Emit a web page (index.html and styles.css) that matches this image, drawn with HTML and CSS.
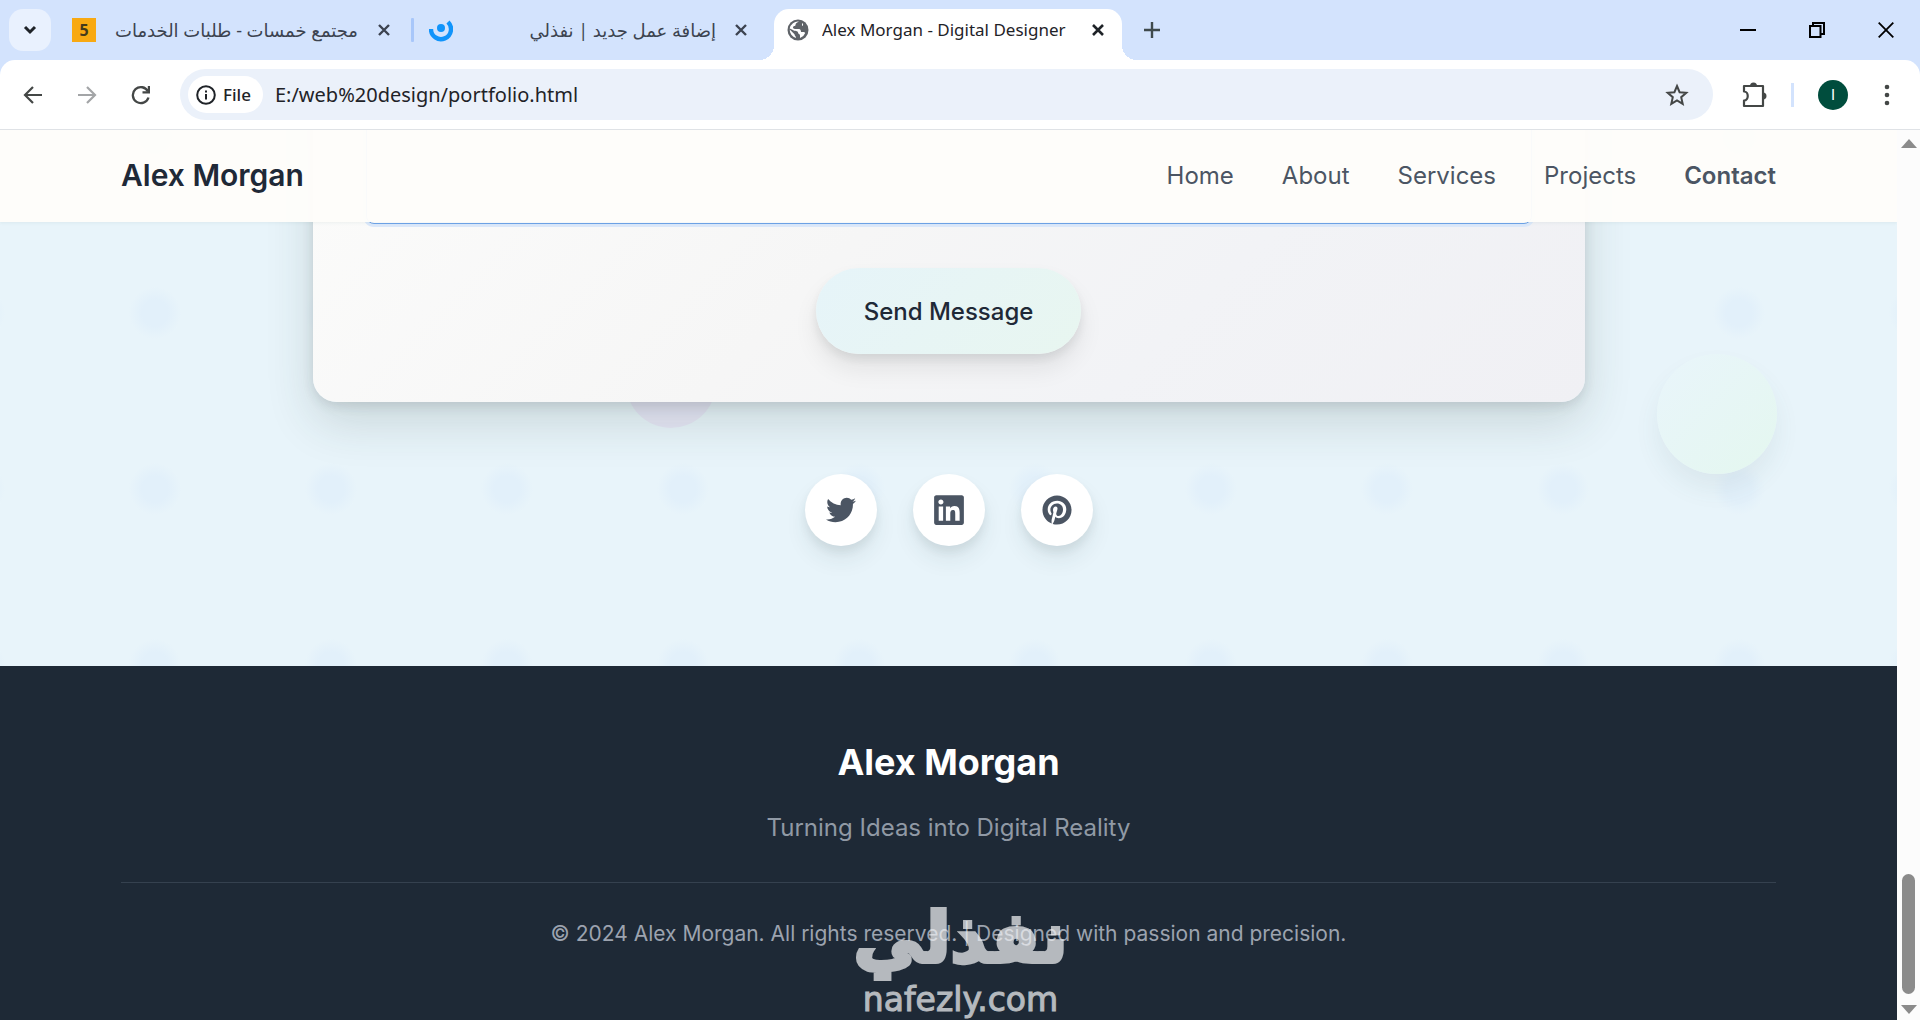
FILE: index.html
```html
<!DOCTYPE html>
<html lang="en">
<head>
<meta charset="utf-8">
<title>Alex Morgan - Digital Designer</title>
<link rel="stylesheet" href="styles.css">
</head>
<body>
<div class="browser">
  <div class="tabstrip">
    <button class="tab-search" aria-label="Search tabs"><svg width="14" height="10" viewBox="0 0 14 10"><path d="M2 2l5 5 5-5" fill="none" stroke="#1f2328" stroke-width="3"/></svg></button>
    <div class="tab tab-first">
      <span class="favicon-five">5</span>
      <span class="tab-title" dir="rtl" lang="ar">مجتمع خمسات - طلبات الخدمات</span>
      <button class="icon-btn" aria-label="Close tab"><svg width="14" height="14" viewBox="0 0 14 14"><path d="M2 2l10 10M12 2L2 12" stroke="#3c4350" stroke-width="2.4"/></svg></button>
    </div>
    <span class="tab-sep"></span>
    <div class="tab tab-second">
      <svg width="24" height="24" viewBox="0 0 24 24"><circle cx="12" cy="10" r="4" fill="#1094fb"/><path d="M2 11a10 10 0 1 0 17-7" fill="none" stroke="#1094fb" stroke-width="4.4"/></svg>
      <span class="tab-title" dir="rtl" lang="ar">إضافة عمل جديد | نفذلي</span>
      <button class="icon-btn" aria-label="Close tab"><svg width="14" height="14" viewBox="0 0 14 14"><path d="M2 2l10 10M12 2L2 12" stroke="#3c4350" stroke-width="2.4"/></svg></button>
    </div>
    <div class="tab tab-active">
      <svg width="22" height="22" viewBox="0 0 22 22"><circle cx="11" cy="11" r="10.5" fill="#5f6368"/><path d="M12 2.600c-2 1.400-3.500 1.400-3.500 3.400 0 1.500-2.500.6-2.500 2.500 0 2 3.500 1.500 6 1.500 1.500 0 2 1.500 2 3h2.500c.6 0 1.500.5 1.700 1a8.300 8.300 0 0 1-5.200 5v-2.500c0-1.500-2-1.500-2-3 0-2-3.500-1-5-2.500L2.700 9.500A8.400 8.400 0 0 1 12 2.600zM2.700 10.500l4.800 4.800c0 1.700 1.500 1.700 1.500 3.700a8.400 8.400 0 0 1-6.300-8.500zM15 4c1.500 1 1.500 2.500 0 3" fill="#fff"/></svg>
      <span class="tab-title">Alex Morgan - Digital Designer</span>
      <button class="icon-btn" aria-label="Close tab"><svg width="14" height="14" viewBox="0 0 14 14"><path d="M2 2l10 10M12 2L2 12" stroke="#1f2328" stroke-width="2.600"/></svg></button>
    </div>
    <button class="icon-btn new-tab" aria-label="New tab"><svg width="16" height="16" viewBox="0 0 16 16"><path d="M8 0v16M0 8h16" stroke="#3f4a4c" stroke-width="2.400"/></svg></button>
    <div class="window-controls">
      <button aria-label="Minimize"><svg width="16" height="16" viewBox="0 0 16 16"><path d="M0 8h16" stroke="#000" stroke-width="2"/></svg></button>
      <button aria-label="Restore"><svg width="16" height="16" viewBox="0 0 16 16"><path d="M1 4h10.500v11H1zM4 4V1h11v11h-3.500" fill="none" stroke="#000" stroke-width="2"/></svg></button>
      <button aria-label="Close"><svg width="16" height="16" viewBox="0 0 16 16"><path d="M.7.7l14.600 14.600M15.300.7L.7 15.300" stroke="#000" stroke-width="1.800"/></svg></button>
    </div>
  </div>

  <div class="toolbar-wrap">
    <div class="toolbar">
      <div class="nav-buttons">
        <button class="icon-btn" aria-label="Back"><svg width="20" height="20" viewBox="0 0 20 20"><path d="M19 10H2M10 2l-8 8 8 8" fill="none" stroke="#444746" stroke-width="2.200"/></svg></button>
        <button class="icon-btn" aria-label="Forward"><svg width="20" height="20" viewBox="0 0 20 20"><path d="M1 10h17M10 2l8 8-8 8" fill="none" stroke="#a3a5a7" stroke-width="2.200"/></svg></button>
        <button class="icon-btn" aria-label="Reload"><svg width="20" height="20" viewBox="0 0 20 20"><path d="M17.500 12.500A8 8 0 1 1 17 6.500" fill="none" stroke="#444746" stroke-width="2.300"/><path d="M19 1v7.500h-7.500v-2.200h5.300V1z" fill="#444746"/></svg></button>
      </div>
      <div class="omnibox">
        <button class="file-chip"><svg width="20" height="20" viewBox="0 0 20 20"><circle cx="10" cy="10" r="8.800" fill="none" stroke="#1f2328" stroke-width="2"/><path d="M10 9v5.500M10 5.500v2" stroke="#1f2328" stroke-width="2"/></svg>File</button>
        <input class="url" type="text" aria-label="Address" value="E:/web%20design/portfolio.html">
        <button class="icon-btn" aria-label="Bookmark"><svg width="24" height="24" viewBox="0 0 24 24"><path d="M12 3l2.600 6.200 6.700.6-5.100 4.400 1.500 6.600-5.700-3.500-5.700 3.500 1.500-6.600-5.100-4.400 6.700-.6z" fill="none" stroke="#444746" stroke-width="2"/></svg></button>
      </div>
      <button class="icon-btn" aria-label="Extensions"><svg width="26" height="26" viewBox="0 0 26 26"><path d="M3 4h19v20H3v-5.500c5 0 5-9 0-9z" fill="none" stroke="#444746" stroke-width="2.200" stroke-linejoin="round"/><path d="M9 4a3.500 3.500 0 0 1 7 0zM22 10.500a3.500 3.500 0 0 1 0 7z" fill="#444746"/></svg></button>
      <span class="tool-sep"></span>
      <button class="avatar">I</button>
      <button class="icon-btn menu" aria-label="Menu"><svg width="6" height="22" viewBox="0 0 6 22"><g fill="#444746"><circle cx="3" cy="3" r="2.300"/><circle cx="3" cy="11" r="2.300"/><circle cx="3" cy="19" r="2.300"/></g></svg></button>
    </div>
  </div>

  <div class="viewport">
    <div class="page">
      <header class="site-header">
        <a class="brand" href="#home">Alex Morgan</a>
        <nav class="site-nav">
          <a href="#home">Home</a><a href="#about">About</a><a href="#services">Services</a><a href="#projects">Projects</a><a class="current" href="#contact">Contact</a>
        </nav>
      </header>
      <main class="contact" id="contact">
        <svg class="dots" aria-hidden="true"><defs><radialGradient id="fade"><stop offset=".5" stop-color="#e2f0fa"/><stop offset="1" stop-color="#e8f4fa"/></radialGradient><pattern id="dot" width="176" height="176" patternUnits="userSpaceOnUse" x="67" y="95"><circle cx="88" cy="88" r="26" fill="url(#fade)"/></pattern></defs><rect width="100%" height="100%" fill="url(#dot)"/></svg>
        <span class="blob"></span>
        <span class="orb"></span>
        <form class="card">
          <textarea class="message" aria-label="Message"></textarea>
          <button class="send" type="button">Send Message</button>
        </form>
        <div class="social">
          <a href="#twitter" aria-label="Twitter"><svg width="30" height="30" viewBox="0 0 512 512"><path fill="#4b5563" d="M459.370 151.716c.325 4.548.325 9.097.325 13.645 0 138.720-105.583 298.558-298.558 298.558-59.452 0-114.680-17.219-161.137-47.106 8.447.974 16.568 1.299 25.340 1.299 49.055 0 94.213-16.568 130.274-44.832-46.132-.975-84.792-31.188-98.112-72.772 6.498.974 12.995 1.624 19.818 1.624 9.421 0 18.843-1.300 27.614-3.573-48.081-9.747-84.143-51.980-84.143-102.985v-1.299c13.969 7.797 30.214 12.670 47.431 13.319-28.264-18.843-46.781-51.005-46.781-87.391 0-19.492 5.197-37.360 14.294-52.954 51.655 63.675 129.300 105.258 216.365 109.807-1.624-7.797-2.599-15.918-2.599-24.040 0-57.828 46.782-104.934 104.934-104.934 30.213 0 57.502 12.670 76.670 33.137 23.715-4.548 46.456-13.320 66.599-25.340-7.798 24.366-24.366 44.833-46.132 57.827 21.117-2.273 41.584-8.122 60.426-16.243-14.292 20.791-32.161 39.308-52.628 54.253z"/></svg></a>
          <a href="#linkedin" aria-label="LinkedIn"><svg width="30" height="34" viewBox="0 0 448 512"><path fill="#4b5563" d="M416 32H31.900C14.300 32 0 46.500 0 64.300v383.400C0 465.500 14.300 480 31.900 480H416c17.600 0 32-14.500 32-32.300V64.300c0-17.800-14.400-32.300-32-32.300zM135.400 416H69V202.200h66.500V416zm-33.200-243c-21.300 0-38.500-17.300-38.500-38.500S80.900 96 102.200 96c21.200 0 38.500 17.300 38.500 38.500 0 21.300-17.200 38.500-38.500 38.500zm282.100 243h-66.400V312c0-24.800-.5-56.700-34.500-56.700-34.600 0-39.900 27-39.900 54.900V416h-66.400V202.200h63.700v29.200h.9c8.900-16.800 30.600-34.500 62.900-34.500 67.200 0 79.700 44.300 79.700 101.900V416z"/></svg></a>
          <a href="#pinterest" aria-label="Pinterest"><svg width="30" height="30" viewBox="0 0 496 512"><path fill="#4b5563" d="M496 256c0 137-111 248-248 248-25.600 0-50.200-3.900-73.400-11.100 10.100-16.500 25.200-43.500 30.800-65 3-11.600 15.400-59 15.400-59 8.100 15.400 31.700 28.500 56.800 28.500 74.800 0 128.700-68.800 128.700-154.300 0-81.900-66.900-143.200-152.900-143.200-107 0-163.900 71.800-163.900 150.100 0 36.400 19.400 81.700 50.300 96.100 4.700 2.200 7.200 1.200 8.300-3.300.8-3.400 5-20.300 6.900-28.100.6-2.500.3-4.700-1.700-7.100-10.100-12.500-18.300-35.300-18.300-56.600 0-54.700 41.400-107.600 112-107.600 60.900 0 103.600 41.500 103.600 100.900 0 67.100-33.900 113.600-78 113.600-24.300 0-42.600-20.100-36.700-44.800 7-29.500 20.500-61.300 20.500-82.600 0-19-10.200-34.900-31.400-34.900-24.900 0-44.900 25.700-44.900 60.200 0 22 7.400 36.800 7.400 36.800s-24.500 103.800-29 123.200c-5 21.400-3 51.600-.9 71.200C65.400 450.900 0 361.100 0 256 0 119 111 8 248 8s248 111 248 248z"/></svg></a>
        </div>
      </main>
      <footer class="site-footer">
        <h2>Alex Morgan</h2>
        <p class="tagline">Turning Ideas into Digital Reality</p>
        <p class="legal">© 2024 Alex Morgan. All rights reserved. | Designed with passion and precision.</p>
        <div class="watermark">
          <span class="wm-ar" dir="rtl" lang="ar">نفذلي</span>
          <span class="wm-en">nafezly.com</span>
        </div>
      </footer>
    </div>
    <div class="scrollbar">
      <svg width="16" height="9" viewBox="0 0 16 9"><path d="M8 0l8 9H0z" fill="#8b8b8b"/></svg>
      <span class="thumb"></span>
      <svg width="16" height="9" viewBox="0 0 16 9"><path d="M8 9l8-9H0z" fill="#8b8b8b"/></svg>
    </div>
  </div>
</div>
</body>
</html>
```
FILE: styles.css
```css
* { box-sizing: border-box; }
body { margin: 0; font-family: Inter, "Liberation Sans", sans-serif; }
button { border: 0; padding: 0; background: none; font: inherit; color: inherit; }
a { text-decoration: none; color: inherit; }
h2, p { margin: 0; }
svg { display: block; flex: none; }

.browser { display: flex; flex-direction: column; height: 100vh; overflow: hidden; }

/* tab strip */
.tabstrip { display: flex; align-items: center; height: 60px; padding-left: 9px; background: #d3e3fd; font-family: "Noto Sans", "DejaVu Sans", sans-serif; font-size: 17px; color: #3c4350; }
.tab-search { display: grid; place-items: center; width: 42px; height: 42px; border-radius: 14px; background: #e9f1fe; }
.icon-btn { display: grid; place-items: center; flex: none; }
.tab { display: flex; align-items: center; flex: none; }
.tab-title { flex: 1; white-space: nowrap; overflow: hidden; line-height: 32px; }
.tab-title:lang(ar) { font-size: 18px; }
.tab-first { width: 319px; margin-left: 21px; gap: 19px; }
.tab-second { width: 319px; margin-left: 15px; gap: 18px; }
.tab-sep { width: 3px; height: 24px; margin-left: 20px; background: #a8c7fa; border-radius: 1px; }
.favicon-five { display: grid; place-items: center; width: 24px; height: 24px; background: #f8a912; color: #443a1c; font-weight: 700; font-size: 16px; }
.tab-active { position: relative; align-self: flex-end; height: 51px; width: 348px; margin-left: 26px; padding: 0 17px 9px 13px; gap: 13px; background: #fff; border-radius: 15px 15px 0 0; color: #1f2328; }
.tab-active::before, .tab-active::after { content: ""; position: absolute; bottom: 0; width: 15px; height: 15px; }
.tab-active::before { left: -15px; background: radial-gradient(circle at 0 0, transparent 15px, #fff 15px); }
.tab-active::after { right: -15px; background: radial-gradient(circle at 100% 0, transparent 15px, #fff 15px); }
.new-tab { margin-left: 22px; }
.window-controls { display: flex; margin-left: auto; }
.window-controls button { display: grid; place-items: center; width: 69px; height: 60px; }

/* toolbar */
.toolbar-wrap { background: #d3e3fd; }
.toolbar { display: flex; align-items: center; height: 70px; padding: 0 30px 0 23px; background: #fff; border-bottom: 1px solid #dfe2e6; border-radius: 15px 15px 0 0; font-family: "Noto Sans", "DejaVu Sans", sans-serif; }
.nav-buttons { display: flex; gap: 34px; }
.omnibox { display: flex; align-items: center; flex: 1; height: 51px; margin: 0 28px 0 29px; padding: 0 24px 0 8px; border-radius: 26px; background: #ebf1fa; }
.file-chip { display: flex; align-items: center; gap: 7px; height: 37px; padding: 0 12px 0 8px; border-radius: 19px; background: #fff; font-size: 17px; font-weight: 500; color: #1f2328; }
.url { flex: 1; min-width: 0; border: 0; padding: 0 12px; background: none; font-family: "Noto Sans", sans-serif; font-size: 20px; color: #1f2328; outline: 0; }
.tool-sep { width: 3px; height: 24px; margin: 0 24px; background: #d3e3fd; }
.avatar { display: grid; place-items: center; width: 30px; height: 30px; border-radius: 50%; background: #004d3d; color: #fff; font-family: Roboto, sans-serif; font-size: 15px; }
.menu { margin-left: 36px; }

/* page viewport */
.viewport { display: flex; flex: 1; min-height: 0; }
.page { display: flex; flex-direction: column; flex: 1; min-width: 0; overflow: hidden; }
.scrollbar { display: flex; flex-direction: column; align-items: center; width: 23px; padding: 9px 0 6px; background: #fcfcfc; }
.thumb { width: 13px; height: 120px; margin-top: auto; margin-bottom: 11px; border-radius: 7px; background: #8b8b8b; }

.site-header { position: relative; z-index: 2; display: flex; align-items: center; justify-content: space-between; flex: none; height: 92px; padding: 0 121px 2px; background: rgba(254, 253, 250, .97); box-shadow: 0 1px 3px rgba(60, 110, 100, .08); }
.brand { font-size: 30px; font-weight: 600; color: #1f2937; }
.site-nav { display: flex; gap: 48px; font-size: 24px; color: #4b5563; }
.current { font-weight: 600; }

.contact { position: relative; display: flex; flex-direction: column; align-items: center; flex: none; margin-top: -92px; padding: 0 36px 120px; background: #e8f4fa; }
.dots { position: absolute; inset: 0; width: 100%; height: 100%; }
.blob { position: absolute; left: 33%; top: 208px; width: 90px; height: 90px; border-radius: 50%; background: #e6e6f6; }
.orb { position: absolute; right: 120px; top: 224px; width: 120px; height: 120px; border-radius: 50%; background: linear-gradient(135deg, #e9f5fb, #e4f7ef); box-shadow: 0 15px 24px rgba(60, 100, 100, .08); }
.card { position: relative; display: flex; flex-direction: column; align-items: center; gap: 44px; width: 100%; max-width: 1272px; margin-top: -76px; padding: 48px 54px; border-radius: 24px; background: linear-gradient(135deg, #fcfcfb, #f6f6f6 45%, #f2f3f6 70%, #f0f0f4); box-shadow: 0 20px 48px rgba(40, 60, 50, .16), 0 4px 12px rgba(40, 40, 50, .12); }
.message { display: block; width: calc(100% + 2px); height: 122px; resize: none; border: 1px solid #6fa3e8; border-radius: 8px; background: #fff; box-shadow: 0 0 0 3px #dbe8fa; }
.send { width: 265px; height: 86px; border-radius: 43px; background: linear-gradient(135deg, #e6f4f9, #e8f6f0); box-shadow: 0 15px 24px rgba(30, 30, 30, .08), 0 6px 9px rgba(30, 40, 40, .08); font-size: 24px; font-weight: 500; color: #1f2937; }
.social { position: relative; display: flex; gap: 36px; margin-top: 72px; }
.social a { display: grid; place-items: center; width: 72px; height: 72px; border-radius: 50%; background: #fff; box-shadow: 0 14px 22px rgba(40, 70, 60, .08), 0 6px 9px rgba(40, 70, 60, .08); }

.site-footer { position: relative; flex: 1; padding: 72px 121px 0; background: #1e2936; text-align: center; }
.site-footer h2 { font-size: 36px; line-height: 48px; font-weight: 700; color: #fff; }
.tagline { margin: 24px 0 36px; font-size: 24px; line-height: 36px; color: #9099a5; }
.legal { padding-top: 35px; border-top: 1px solid #35414f; font-size: 21px; line-height: 32px; color: #9ca3af; }
.watermark { position: absolute; left: 0; right: 0; bottom: 0; display: flex; flex-direction: column; align-items: center; padding-left: 24px; opacity: .72; color: #f0f1f3; }
.wm-ar { font-family: "DejaVu Sans", sans-serif; font-weight: 700; font-size: 70px; line-height: 84px; -webkit-text-stroke: 4px #f0f1f3; stroke-linejoin: round; }
.wm-en { font-family: "DejaVu Sans", sans-serif; font-size: 33px; line-height: 40px; -webkit-text-stroke: 1px #f0f1f3; }
```
